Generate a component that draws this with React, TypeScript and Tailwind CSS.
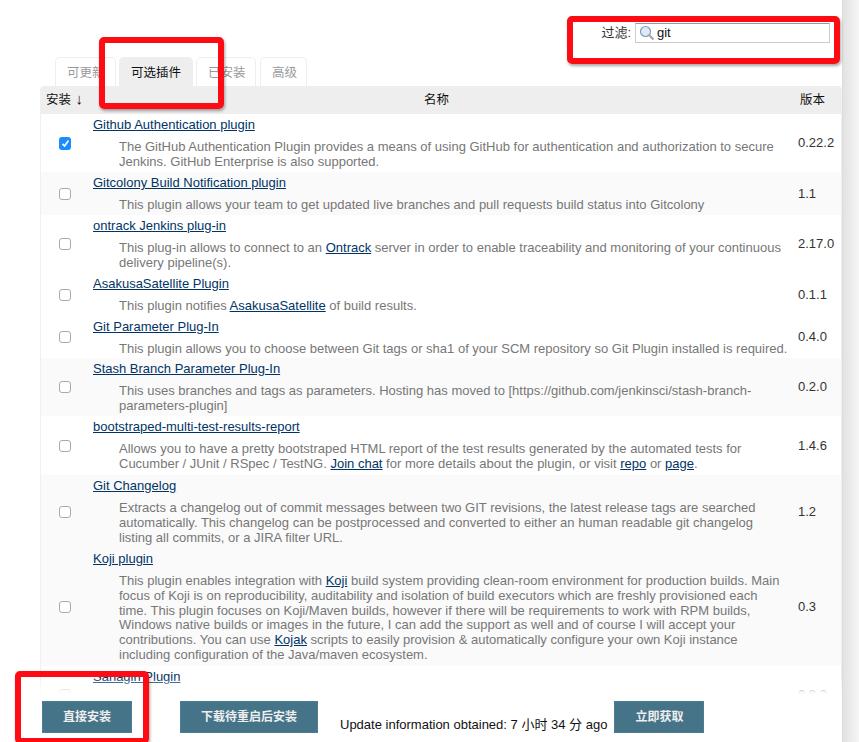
import React from "react";

const CJK = "font-['Liberation_Sans','Noto_Sans_CJK_SC',sans-serif]";

const A = (props: { children: React.ReactNode }) => (
  <a href="#" className="text-[#003466] underline">
    {props.children}
  </a>
);

type Plugin = {
  name: string;
  desc: React.ReactNode;
  version: string;
  checked?: boolean;
  shade?: boolean;
  h: string;
};

const plugins: Plugin[] = [
  {
    name: "Github Authentication plugin",
    desc: "The GitHub Authentication Plugin provides a means of using GitHub for authentication and authorization to secure Jenkins. GitHub Enterprise is also supported.",
    version: "0.22.2",
    checked: true,
    h: "h-[58px]",
  },
  {
    name: "Gitcolony Build Notification plugin",
    desc: "This plugin allows your team to get updated live branches and pull requests build status into Gitcolony",
    version: "1.1",
    shade: true,
    h: "h-[43px]",
  },
  {
    name: "ontrack Jenkins plug-in",
    desc: (
      <>
        This plug-in allows to connect to an <A>Ontrack</A> server in order to enable traceability and monitoring of your continuous delivery pipeline(s).
      </>
    ),
    version: "2.17.0",
    h: "h-[58px]",
  },
  {
    name: "AsakusaSatellite Plugin",
    desc: (
      <>
        This plugin notifies <A>AsakusaSatellite</A> of build results.
      </>
    ),
    version: "0.1.1",
    h: "h-[43px]",
  },
  {
    name: "Git Parameter Plug-In",
    desc: "This plugin allows you to choose between Git tags or sha1 of your SCM repository so Git Plugin installed is required.",
    version: "0.4.0",
    h: "h-[42px]",
  },
  {
    name: "Stash Branch Parameter Plug-In",
    desc: "This uses branches and tags as parameters. Hosting has moved to [https://github.com/jenkinsci/stash-branch-parameters-plugin]",
    version: "0.2.0",
    shade: true,
    h: "h-[58px]",
  },
  {
    name: "bootstraped-multi-test-results-report",
    desc: (
      <>
        Allows you to have a pretty bootstraped HTML report of the test results generated by the automated tests for Cucumber / JUnit / RSpec / TestNG. <A>Join chat</A> for more details about the plugin, or visit <A>repo</A> or <A>page</A>.
      </>
    ),
    version: "1.4.6",
    h: "h-[59px]",
  },
  {
    name: "Git Changelog",
    desc: "Extracts a changelog out of commit messages between two GIT revisions, the latest release tags are searched automatically. This changelog can be postprocessed and converted to either an human readable git changelog listing all commits, or a JIRA filter URL.",
    version: "1.2",
    shade: true,
    h: "h-[73px]",
  },
  {
    name: "Koji plugin",
    desc: (
      <>
        This plugin enables integration with <A>Koji</A> build system providing clean-room environment for production builds. Main focus of Koji is on reproducibility, auditability and isolation of build executors which are freshly provisioned each time. This plugin focuses on Koji/Maven builds, however if there will be requirements to work with RPM builds, Windows native builds or images in the future, I can add the support as well and of course I will accept your contributions. You can use <A>Kojak</A> scripts to easily provision &amp; automatically configure your own Koji instance including configuration of the Java/maven ecosystem.
      </>
    ),
    version: "0.3",
    shade: true,
    h: "h-[118px]",
  },
  {
    name: "Sahagin Plugin",
    desc: "",
    version: "0.8.2",
    h: "h-[58px]",
  },
];

const Row = (props: { p: Plugin }) => {
  const p = props.p;
  return (
    <tr className={`${p.h} ${p.shade ? "bg-[#fafafa]" : "bg-white"}`}>
      <td className="align-middle">
        {p.checked ? (
          <span className="ml-[18px] flex h-[13px] w-[12px] items-center justify-center rounded-[3px] bg-[#1a8cff]">
            <svg width="9" height="9" viewBox="0 0 9 9">
              <path d="M1.5 4.8 L3.6 7 L7.5 1.6" fill="none" stroke="#fff" strokeWidth="1.7" />
            </svg>
          </span>
        ) : (
          <span className="ml-[18px] block h-[12px] w-[12px] rounded-[3px] border border-[#aaa] bg-white" />
        )}
      </td>
      <td className="align-top pt-[3px] pr-[8px]">
        <div className="leading-[15px]">
          <A>{p.name}</A>
        </div>
        <div className="mt-[8px] ml-[26px] leading-[14.8px] text-[#777]">{p.desc}</div>
      </td>
      <td className="align-middle pl-[2px] text-[#333]">{p.version}</td>
    </tr>
  );
};

export default function App() {
  return (
    <div className={`relative h-[742px] w-[859px] overflow-hidden bg-white text-[13px] text-[#333] ${CJK}`}>
      <div className="flex h-[57px] justify-end pt-[23px] pr-[29px]">
        <span className="mr-[4px] h-[20px] leading-[19px] text-[#333]">过滤:</span>
        <div className="flex h-[20px] w-[195px] items-center border border-[#ccc] border-t-[#999] pl-[3px] text-[#111]">
          <svg width="16" height="16" viewBox="0 0 16 16" className="mr-[2px] shrink-0">
            <circle cx="6.5" cy="6.5" r="5" fill="#dfeaf7" stroke="#7f9cc0" strokeWidth="1.2" />
            <path d="M10.2 10.2 L14.5 14.5" stroke="#a9a9a9" strokeWidth="2.4" />
          </svg>
          git
        </div>
      </div>

      <div className="flex h-[29px] gap-[3px] pl-[55px] text-[12.5px]">
        <div className="h-[29px] w-[61px] rounded-t-[5px] border border-b-0 border-[#eee] pl-[11px] pt-[6px] text-[#999]">可更新</div>
        <div className="h-[29px] w-[74px] rounded-t-[5px] bg-[#eee] pl-[12px] pt-[7px] text-[#111]">可选插件</div>
        <div className="h-[29px] w-[60px] rounded-t-[5px] border border-b-0 border-[#eee] pl-[11px] pt-[6px] text-[#999]">已安装</div>
        <div className="ml-[1px] h-[29px] w-[47px] rounded-t-[5px] border border-b-0 border-[#eee] pl-[11px] pt-[6px] text-[#999]">高级</div>
      </div>

      <div className="ml-[40px] w-[802px] overflow-hidden rounded-t-[4px] border-x border-[#f0f0f0]">
        <table className="w-full table-fixed border-collapse">
          <colgroup>
            <col className="w-[52px]" />
            <col />
            <col className="w-[45px]" />
          </colgroup>
          <thead>
            <tr className="h-[28px] bg-[#eee] text-[12.5px] text-[#111]">
              <th className="whitespace-nowrap pl-[5px] text-left font-normal">
                安装 <span className="ml-[1px] text-[15px] leading-[15px]">↓</span>
              </th>
              <th className="pr-[16px] font-normal">名称</th>
              <th className="pl-[4px] text-left font-normal">版本</th>
            </tr>
          </thead>
          <tbody>
            {plugins.map((p) => (
              <Row key={p.name} p={p} />
            ))}
          </tbody>
        </table>
      </div>

      {/* fade over the list, then the sticky button bar */}
      <div className="absolute bottom-0 left-0 h-[64px] w-[842px] bg-gradient-to-b from-white/0 via-white via-[25%] to-white" />
      <div className="absolute bottom-[9px] left-0 flex w-[842px] items-start pl-[42px]">
        <button className="h-[32px] w-[90px] border border-[#4a7f93] bg-[#457488] text-[12px] font-bold text-[#eee]">直接安装</button>
        <button className="ml-[48px] h-[32px] w-[138px] border border-[#4a7f93] bg-[#457488] text-[12px] font-bold text-[#eee]">下载待重启后安装</button>
        <span className="ml-[22px] mt-[16px] whitespace-nowrap leading-[15px] text-[#111]">Update information obtained: 7 小时 34 分 ago</span>
        <button className="ml-[7px] h-[32px] w-[90px] border border-[#4a7f93] bg-[#457488] text-[12px] font-bold text-[#eee]">立即获取</button>
      </div>

      {/* right edge gutter of the screenshot */}
      <div className="absolute right-0 top-0 h-full w-[17px] border-l border-[#dcdcdc] bg-gradient-to-r from-[#e2e2e2] to-[#f6f6f6]" />

      {/* red annotation boxes */}
      <div className="absolute left-[99px] top-[37px] h-[72px] w-[125px] rounded-[5px] border-[6px] border-[#fe0b14] shadow-[1px_2px_3px_rgba(0,0,0,0.35)]" />
      <div className="absolute left-[567px] top-[16px] h-[48px] w-[273px] rounded-[5px] border-[6px] border-[#fe0b14] shadow-[1px_2px_3px_rgba(0,0,0,0.35)]" />
      <div className="absolute left-[15px] top-[671px] h-[73px] w-[134px] rounded-[5px] border-[6px] border-[#fe0b14] shadow-[1px_2px_3px_rgba(0,0,0,0.35)]" />
    </div>
  );
}
